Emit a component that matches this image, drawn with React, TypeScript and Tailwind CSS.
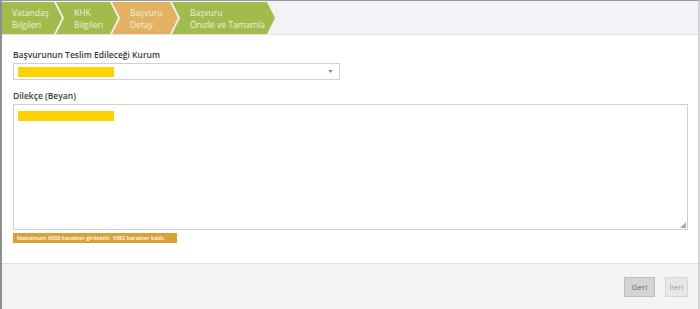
import React from 'react';

const steps = [
  { l1: 'Vatandaş', l2: 'Bilgileri', w: 'w-[60px]', first: true, active: false },
  { l1: 'KHK', l2: 'Bilgileri', w: 'w-[62px]', first: false, active: false },
  { l1: 'Başvuru', l2: 'Detay', w: 'w-[66px]', first: false, active: true },
  { l1: 'Başvuru', l2: 'Önizle ve Tamamla', w: 'w-[103px]', first: false, active: false },
];

const App = () => {
  return (
    <div
      className="w-[700px] h-[309px] flex flex-col bg-white border-t border-t-[#9a9a9a] border-l-2 border-l-[#8f8f8f] border-r-2 border-r-[#d4d4d8] overflow-hidden"
      style={{ fontFamily: '"Open Sans", "Noto Sans", sans-serif' }}
    >
      {/* wizard steps */}
      <div className="h-[34px] shrink-0 bg-[#f3f3f7] border-b border-[#e2e2e6] pt-[1px] flex">
        {steps.map((s, i) => (
          <div
            key={i}
            className={`${s.w} h-[32px] flex flex-col justify-center pt-[1px] text-[8.5px] leading-[12px] text-[#eef2dc] ${
              s.active ? 'bg-[#e2b262]' : 'bg-[#a3ba4d]'
            } ${
              s.first
                ? 'pl-[10px] [clip-path:polygon(0_0,calc(100%-8px)_0,100%_50%,calc(100%-8px)_100%,0_100%)]'
                : '-ml-[6px] pl-[18px] [clip-path:polygon(0_0,calc(100%-8px)_0,100%_50%,calc(100%-8px)_100%,0_100%,8px_50%)]'
            }`}
          >
            <span>{s.l1}</span>
            <span>{s.l2}</span>
          </div>
        ))}
      </div>

      {/* form body */}
      <div className="flex-1 px-[11px] pt-[14px]">
        <label className="block text-[8.5px] font-semibold text-[#3a3a3a] leading-[12px]">
          Başvurunun Teslim Edileceği Kurum
        </label>
        <div className="mt-[2px] w-[327px] h-[17px] border border-[#d0d0d0] flex items-center justify-between pl-[4px] pr-[6px]">
          <div className="w-[96px] h-[10px] bg-[#ffd200]" />
          <svg width="5" height="3" viewBox="0 0 6 4">
            <path d="M0 0h6L3 4z" fill="#888" />
          </svg>
        </div>

        <label className="block mt-[10px] text-[8.5px] font-semibold text-[#3a3a3a] leading-[12px]">
          Dilekçe (Beyan)
        </label>
        <div className="relative mt-[2px] w-[675px] h-[126px] border border-[#d0d0d0] pl-[4px] pt-[6px]">
          <div className="w-[96px] h-[10px] bg-[#ffd200]" />
          <svg className="absolute right-[1px] bottom-[1px]" width="6" height="6" viewBox="0 0 6 6">
            <path d="M6 0V6H0z" fill="#a8a8a8" />
          </svg>
        </div>
        <div className="mt-[3px] w-[164px] h-[10px] bg-[#dba136] text-white text-[5.5px] font-semibold leading-[10px] px-[4px] whitespace-nowrap">
          Maksimum 6000 karakter girilebilir. 5982 karakter kaldı.
        </div>
      </div>

      {/* footer */}
      <div className="h-[46px] shrink-0 bg-[#f4f4f7] border-t border-[#e0e0e4] flex justify-end items-start pt-[13px] pr-[10px] gap-[10px]">
        <button className="w-[31px] h-[20px] bg-[#d4d4d6] border border-[#bdbdbf] text-[8px] text-[#666]">
          Geri
        </button>
        <button className="w-[23px] h-[20px] bg-[#e7e7e9] border border-[#d6d6d8] text-[8px] text-[#9a9a9a]">
          İleri
        </button>
      </div>
    </div>
  );
};

export default App;
